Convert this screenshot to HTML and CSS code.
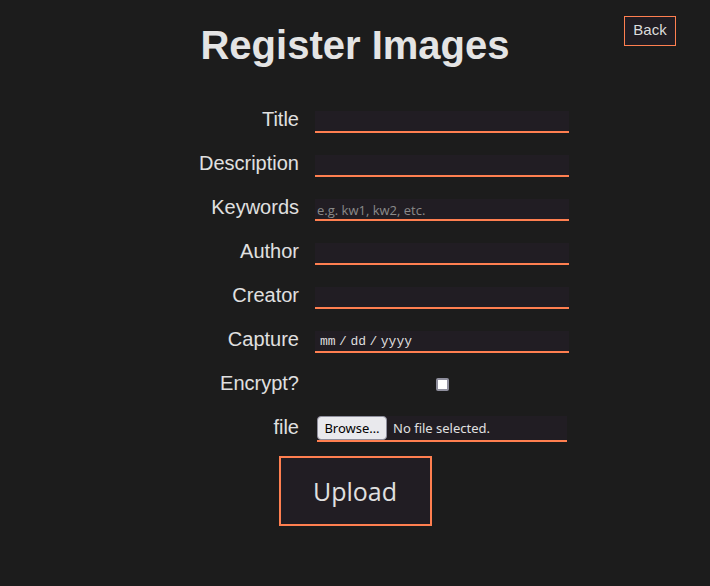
FILE: index.html
```html
<!DOCTYPE html>
<html lang="en">
<head>
<meta charset="utf-8">
<title>Register Images</title>
<link rel="stylesheet" href="styles.css">
</head>
<body>
<header class="header">
  <div class="spacer"></div>
  <h1 class="title">Register Images</h1>
  <a class="back" href="#">Back</a>
</header>
<form class="form">
  <div class="grid">
    <label class="label" for="title">Title</label>
    <input class="field" id="title" type="text">
    <label class="label" for="desc">Description</label>
    <input class="field" id="desc" type="text">
    <label class="label" for="kw">Keywords</label>
    <input class="field" id="kw" type="text" placeholder="e.g. kw1, kw2, etc.">
    <label class="label" for="author">Author</label>
    <input class="field" id="author" type="text">
    <label class="label" for="creator">Creator</label>
    <input class="field" id="creator" type="text">
    <label class="label" for="capture">Capture</label>
    <input class="field date" id="capture" type="text" placeholder="mm / dd / yyyy">
    <label class="label" for="enc">Encrypt?</label>
    <input class="check" id="enc" type="checkbox">
    <label class="label">file</label>
    <div class="file">
      <button class="browse" type="button">Browse…</button>
      <span class="nofile">No file selected.</span>
    </div>
  </div>
  <button class="upload" type="submit">Upload</button>
</form>
</body>
</html>
```
FILE: styles.css
```css
html, body {
  margin: 0;
  padding: 0;
  background: #1c1c1c;
}
body {
  font-family: "Liberation Sans", Arial, sans-serif;
  color: #e2e2e2;
}
.header {
  display: grid;
  grid-template-columns: 1fr auto 1fr;
  padding: 16px 34px 0 34px;
}
.title {
  margin: 6px 0 0;
  font-size: 40px;
  line-height: 46px;
  font-weight: bold;
  color: #e4e4e4;
}
.back {
  justify-self: end;
  align-self: start;
  display: block;
  box-sizing: border-box;
  width: 52px;
  height: 30px;
  padding: 4px 0 0;
  text-align: center;
  font-size: 15px;
  line-height: 18px;
  color: #dcdcdc;
  text-decoration: none;
  background: #211d23;
  border: 1px solid #ff7f50;
}
.form {
  display: flex;
  flex-direction: column;
  align-items: center;
  padding-top: 40px;
}
.grid {
  display: grid;
  grid-template-columns: 158px 254px;
  grid-auto-rows: 24px;
  column-gap: 16px;
  row-gap: 20px;
}
.label {
  font-size: 20px;
  line-height: 23px;
  text-align: right;
  color: #e0e0e0;
}
.field {
  box-sizing: border-box;
  margin: 3px 0 0;
  width: 254px;
  height: 22px;
  padding: 1px 2px 0;
  background: #211d23;
  border: none;
  border-bottom: 2px solid #ff7f50;
  outline: none;
  color: #e0e0e0;
  font-family: "Open Sans", sans-serif;
  font-size: 13px;
}
.field::placeholder {
  color: #8a8a8a;
}
.date {
  padding-left: 5px;
  font-family: "Liberation Mono", monospace;
  font-size: 13px;
  word-spacing: -4.3px;
}
.date::placeholder {
  color: #dedede;
  word-spacing: -4.3px;
}
.check {
  justify-self: center;
  align-self: start;
  margin: 6px 0 0;
  width: 13px;
  height: 13px;
  appearance: none;
  box-sizing: border-box;
  background: #ffffff;
  border: 2px solid #8f8f9d;
  border-radius: 2px;
}
.file {
  display: flex;
  align-items: center;
  box-sizing: border-box;
  margin: 0 2px;
  height: 26px;
  background: #211d23;
  border-bottom: 2px solid #ff7f50;
}
.browse {
  box-sizing: border-box;
  width: 70px;
  height: 24px;
  padding: 0;
  margin: 0;
  background: #e9e9ed;
  border: 1px solid #8f8f9d;
  border-radius: 4px;
  color: #000;
  font-family: "Noto Sans", sans-serif;
  font-size: 13px;
}
.nofile {
  margin-left: 6px;
  font-family: "Noto Sans", sans-serif;
  font-size: 13px;
  color: #e0e0e0;
}
.upload {
  margin-top: 16px;
  box-sizing: border-box;
  width: 153px;
  height: 70px;
  padding: 0;
  background: #211d23;
  border: 2px solid #ff7f50;
  color: #e0e0e0;
  font-family: "Open Sans", sans-serif;
  font-size: 25px;
}
```
